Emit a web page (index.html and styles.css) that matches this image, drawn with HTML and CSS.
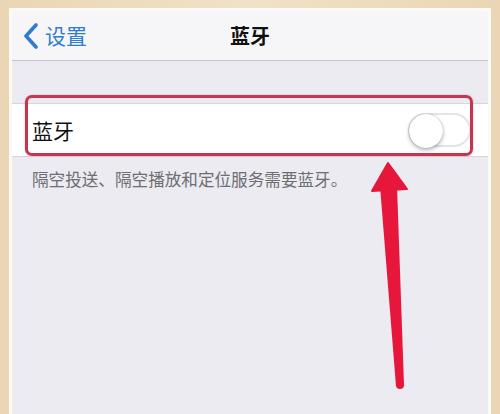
FILE: index.html
```html
<!DOCTYPE html>
<html lang="zh">
<head>
<meta charset="utf-8">
<link rel="stylesheet" href="styles.css">
</head>
<body>
<div class="frame">
  <div class="screen">
    <header class="nav">
      <a class="back">
        <svg class="chev" width="16" height="26" viewBox="0 0 16 26"><path d="M13 2 L3 13 L13 24" fill="none" stroke="#2f7bd1" stroke-width="3.6" stroke-linecap="round" stroke-linejoin="round"/></svg>
        <span>设置</span>
      </a>
      <h1 class="title">蓝牙</h1>
    </header>
    <section class="group">
      <div class="cell">
        <span class="label">蓝牙</span>
        <span class="toggle"><span class="knob"></span></span>
      </div>
      <p class="footnote">隔空投送、隔空播放和定位服务需要蓝牙。</p>
    </section>
  </div>
  <div class="highlight"></div>
  <svg class="arrow" width="500" height="414" viewBox="0 0 500 414">
    <polygon points="388,163 372,191 407,189" fill="#e6173b" stroke="#e6173b" stroke-width="2" stroke-linejoin="round"/>
    <polygon points="380,186 397,186 404,385 396,386" fill="#e6173b"/>
    <circle cx="400" cy="385" r="4" fill="#e6173b"/>
  </svg>
</div>
</body>
</html>
```
FILE: styles.css
```css
* { box-sizing: border-box; }
html, body { margin: 0; padding: 0; }
body {
  width: 500px;
  height: 414px;
  overflow: hidden;
  background: linear-gradient(90deg, #ead6b4 0%, #f0e2c8 50%, #ead6b4 100%);
  font-family: "Noto Sans CJK SC", "Noto Sans", sans-serif;
}
.frame {
  position: relative;
  width: 500px;
  height: 414px;
  padding: 8px 9px 0 9px;
}
.screen {
  height: 100%;
  border: 3px solid #fbfaf7;
  border-bottom: none;
  background: #ebebf1;
  display: flex;
  flex-direction: column;
}
.nav {
  height: 50px;
  background: #f6f6f8;
  border-bottom: 1px solid #c6c6ca;
  display: flex;
  align-items: center;
  position: relative;
  padding-left: 11px;
}
.back {
  display: flex;
  align-items: center;
  gap: 6px;
  color: #2f7bd1;
  font-size: 21px;
  line-height: 1;
}
.chev { display: block; }
.title {
  position: absolute;
  left: 0;
  right: 0;
  top: 0;
  height: 49px;
  margin: 0;
  display: flex;
  align-items: center;
  justify-content: center;
  font-size: 20px;
  font-weight: 700;
  color: #111;
}
.group {
  padding-top: 42px;
}
.cell {
  height: 54px;
  background: #fff;
  border-top: 1px solid #d6d6da;
  border-bottom: 1px solid #d6d6da;
  display: flex;
  align-items: center;
  justify-content: space-between;
  padding: 0 17px 0 20px;
}
.label {
  font-size: 21px;
  color: #111;
}
.toggle {
  width: 63px;
  height: 34px;
  border-radius: 17px;
  border: 2px solid #e4e4e8;
  background: #fff;
  position: relative;
  display: block;
}
.knob {
  position: absolute;
  left: -1px;
  top: -1px;
  width: 34px;
  height: 34px;
  border-radius: 50%;
  background: #fff;
  box-shadow: 0 2px 4px rgba(0,0,0,0.3), 0 0 1px rgba(0,0,0,0.35);
}
.footnote {
  margin: 10px 0 0 20px;
  font-size: 16.6px;
  color: #6d6d72;
  line-height: 24px;
}
.highlight {
  position: absolute;
  left: 25px;
  top: 95px;
  width: 448px;
  height: 61px;
  border: 3px solid #c33550;
  border-radius: 7px;
  box-shadow: 0 0 2px rgba(230,100,120,0.5);
}
.arrow {
  position: absolute;
  left: 0;
  top: 0;
  pointer-events: none;
}
```
